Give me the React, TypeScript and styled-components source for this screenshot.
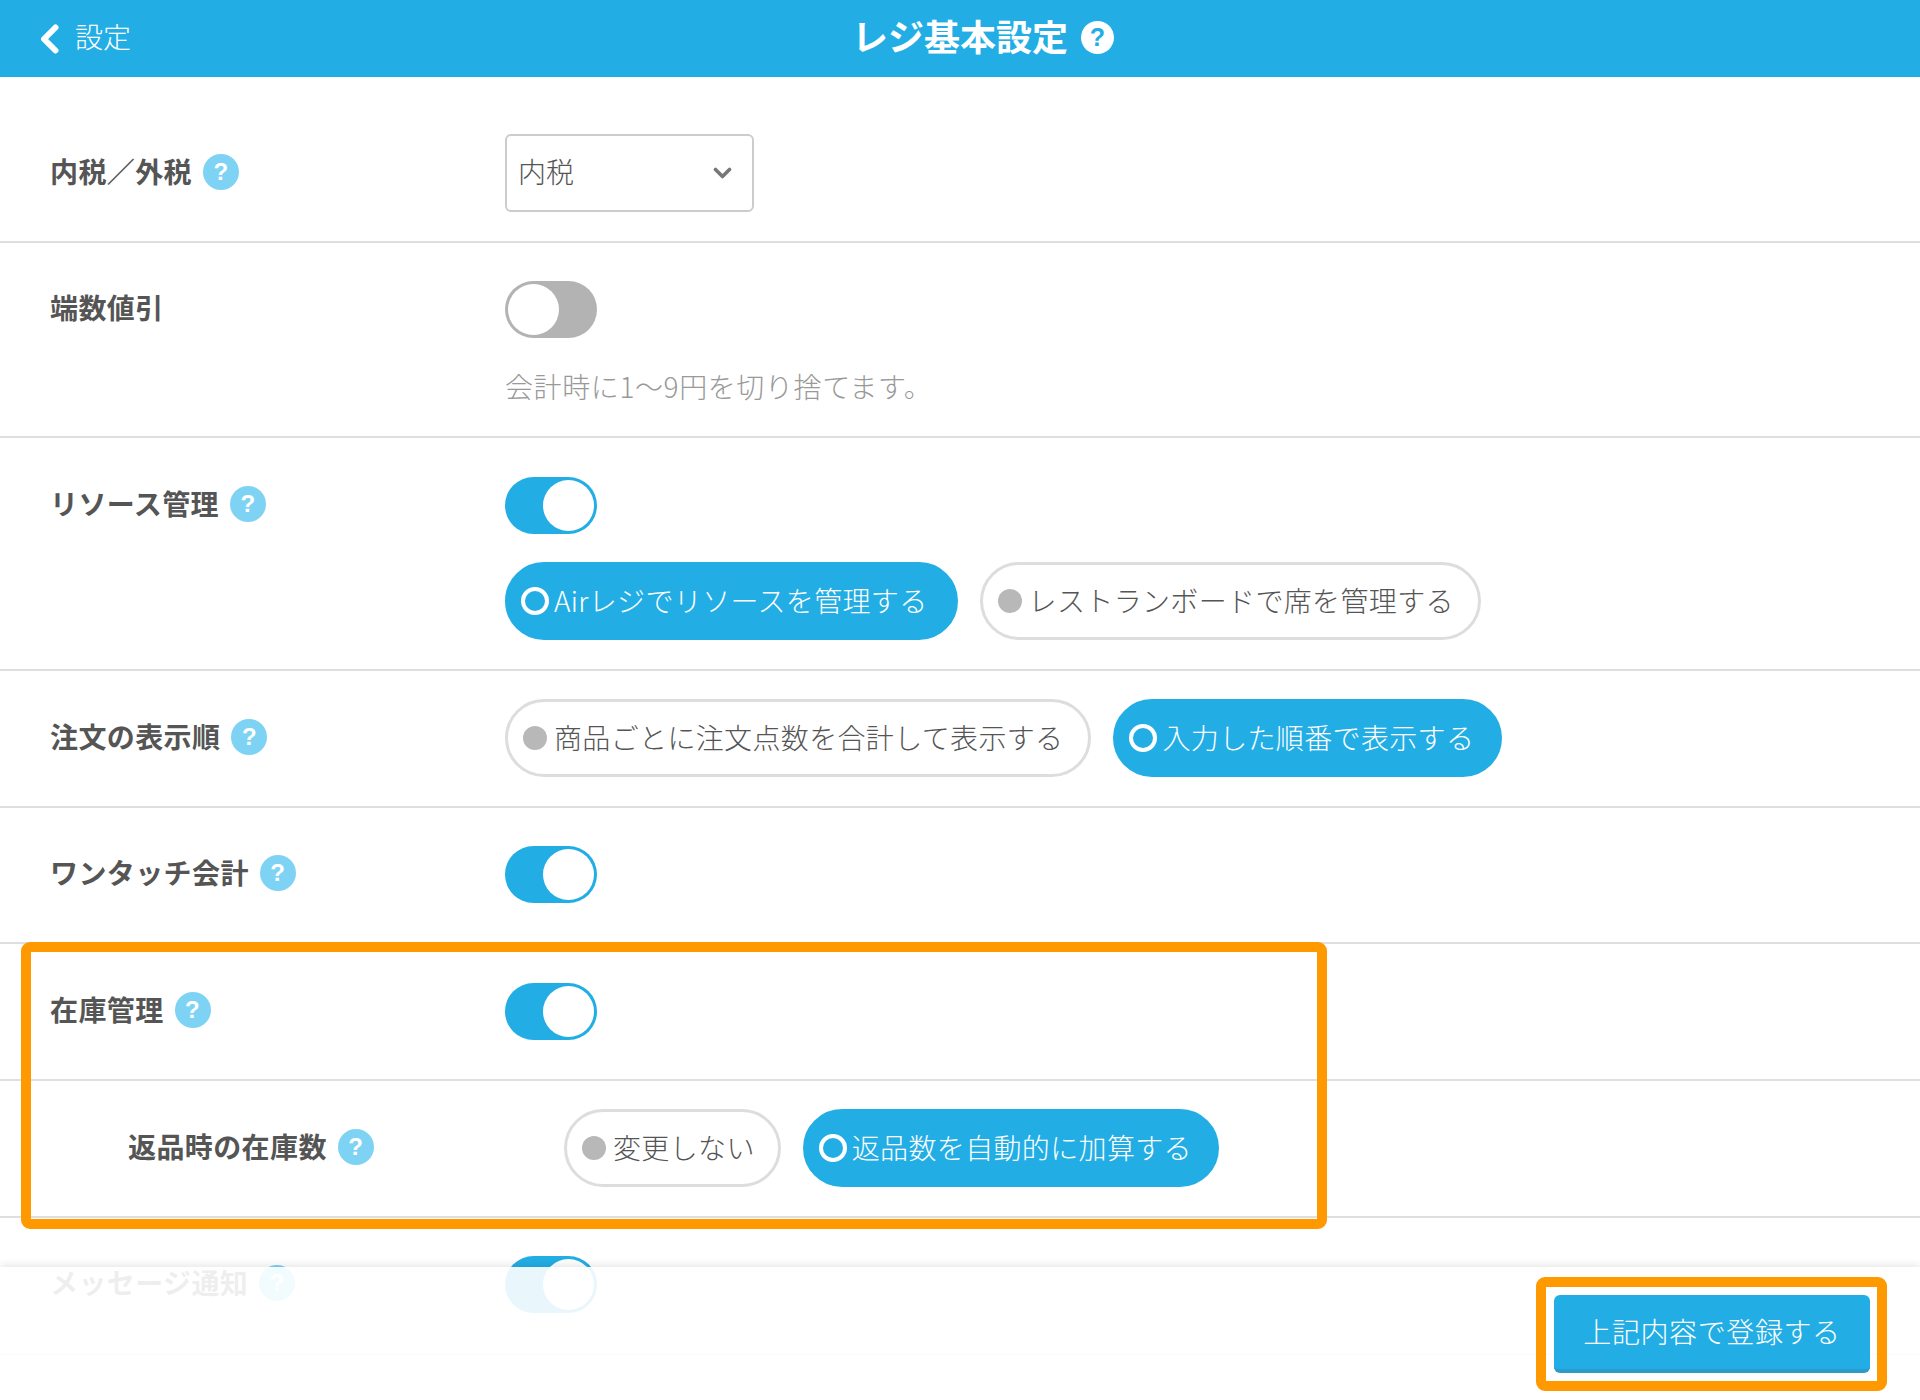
import React from "react";
import styled, { createGlobalStyle } from "styled-components";

const Global = createGlobalStyle`
  html, body { margin: 0; padding: 0; background: #fff; }
  body { font-family: "Noto Sans CJK JP", "Noto Sans", sans-serif; color: #555; }
  * { box-sizing: border-box; }
`;

const Page = styled.div`
  position: relative;
  width: 1920px;
  height: 1400px;
  overflow: hidden;
  background: #fff;
`;

const Header = styled.header`
  display: grid;
  grid-template-columns: 1fr auto 1fr;
  align-items: center;
  height: 77px;
  background: #22aee5;
  color: #fff;
`;

const Back = styled.div`
  display: flex;
  align-items: center;
  gap: 16px;
  padding-left: 40px;
  font-size: 28px;
  font-weight: 300;
`;

const BackText = styled.span`
  margin-bottom: 5px;
`;

const Title = styled.h1`
  margin: 0 0 7px;
  font-size: 36px;
  font-weight: 700;
  line-height: 70px;
`;

const HeaderHelp = styled.div`
  display: flex;
  padding-left: 13px;
`;

const Help = styled.span<{ $light?: boolean }>`
  display: inline-flex;
  align-items: center;
  justify-content: center;
  flex: none;
  width: ${(p) => (p.$light ? 33 : 36)}px;
  height: ${(p) => (p.$light ? 33 : 36)}px;
  margin-bottom: 3px;
  border-radius: 50%;
  background: ${(p) => (p.$light ? "#fff" : "#7ed3f5")};
  color: ${(p) => (p.$light ? "#22aee5" : "#fff")};
  font-family: "Liberation Sans", sans-serif;
  font-weight: 700;
  font-size: ${(p) => (p.$light ? 25 : 24)}px;
  line-height: 1;
`;

const List = styled.main`
  padding-top: 29px;
`;

const Row = styled.section<{ $indent?: boolean }>`
  display: flex;
  align-items: flex-start;
  padding: 28px 0 28.7px ${(p) => (p.$indent ? 128 : 50)}px;
  border-bottom: 2px solid #dfdfdf;
`;

const Label = styled.div<{ $indent?: boolean }>`
  display: flex;
  align-items: center;
  gap: 11px;
  flex: none;
  width: ${(p) => (p.$indent ? 436 : 455)}px;
  height: 78px;
  font-size: 28px;
  font-weight: 700;
  letter-spacing: 0.4px;
  color: #555;
`;

const LabelText = styled.span`
  margin-bottom: 5px;
`;

const Control = styled.div`
  display: flex;
  flex-direction: column;
  align-items: flex-start;
`;

const ToggleSlot = styled.div`
  display: flex;
  align-items: center;
  height: 78px;
`;

const Toggle = styled.div<{ $on?: boolean }>`
  display: flex;
  justify-content: ${(p) => (p.$on ? "flex-end" : "flex-start")};
  align-items: center;
  width: 92px;
  height: 57px;
  padding: 3px;
  border-radius: 29px;
  background: ${(p) => (p.$on ? "#22aee5" : "#b3b3b3")};
`;

const Thumb = styled.span`
  width: 51px;
  height: 51px;
  border-radius: 50%;
  background: #fff;
`;

const Hint = styled.p`
  margin: 17px 0 0;
  padding-bottom: 2px;
  font-size: 28px;
  font-weight: 300;
  letter-spacing: 0.6px;
  line-height: 40px;
  color: #999;
`;

const SelectBox = styled.div`
  display: flex;
  align-items: center;
  justify-content: space-between;
  width: 249px;
  height: 78px;
  padding: 0 20px 0 11px;
  border: 2px solid #ccc;
  border-radius: 6px;
  font-size: 28px;
  font-weight: 300;
  color: #555;
`;

const SelectText = styled.span`
  margin-bottom: 5px;
`;

const Pills = styled.div<{ $spaced?: boolean }>`
  display: flex;
  gap: 22px;
  margin-top: ${(p) => (p.$spaced ? 18 : 0)}px;
`;

const Pill = styled.div<{ $on?: boolean; $end?: number }>`
  display: flex;
  align-items: center;
  gap: 5px;
  height: 78px;
  padding: 0 ${(p) => p.$end ?? 25}px 0 13px;
  border: 3px solid ${(p) => (p.$on ? "#22aee5" : "#ddd")};
  border-radius: 39px;
  background: ${(p) => (p.$on ? "#22aee5" : "#fff")};
  color: ${(p) => (p.$on ? "#fff" : "#555")};
  font-size: 28px;
  font-weight: 300;
  letter-spacing: 0.35px;
  white-space: nowrap;
`;

const PillText = styled.span`
  margin-bottom: 3px;
`;

const Indicator = styled.span`
  display: flex;
  align-items: center;
  justify-content: center;
  flex: none;
  width: 28px;
  height: 28px;
`;

const Dot = styled.span<{ $on?: boolean }>`
  width: ${(p) => (p.$on ? 28 : 24)}px;
  height: ${(p) => (p.$on ? 28 : 24)}px;
  border-radius: 50%;
  background: ${(p) => (p.$on ? "transparent" : "#b8b8b8")};
  border: ${(p) => (p.$on ? "4.5px solid #fff" : "none")};
`;

const Footer = styled.footer`
  position: absolute;
  left: 0;
  right: 0;
  top: 1267px;
  bottom: 0;
  display: flex;
  justify-content: flex-end;
  align-items: flex-start;
  padding: 28px 50px 0 0;
  background: rgba(255, 255, 255, 0.9);
  box-shadow: 0 -2px 8px rgba(0, 0, 0, 0.1);
`;

const Submit = styled.button`
  width: 316px;
  height: 78px;
  padding: 0 0 3px;
  border: none;
  border-bottom: 4px solid #2e9ac8;
  border-radius: 6px;
  background: #22aee5;
  color: #fff;
  font-family: inherit;
  font-size: 28px;
  font-weight: 300;
  letter-spacing: 0.6px;
`;

const Highlight = styled.div<{ $x: number; $y: number; $w: number; $h: number }>`
  position: absolute;
  left: ${(p) => p.$x}px;
  top: ${(p) => p.$y}px;
  width: ${(p) => p.$w}px;
  height: ${(p) => p.$h}px;
  border: 10px solid #ff9900;
  border-radius: 9px;
  pointer-events: none;
`;

const Sw = ({ on }: { on?: boolean }) => (
  <ToggleSlot>
    <Toggle $on={on}>
      <Thumb />
    </Toggle>
  </ToggleSlot>
);

const Opt = ({ on, end, children }: { on?: boolean; end?: number; children: React.ReactNode }) => (
  <Pill $on={on} $end={end}>
    <Indicator>
      <Dot $on={on} />
    </Indicator>
    <PillText>{children}</PillText>
  </Pill>
);

const Lbl = ({ text, help = true, indent }: { text: string; help?: boolean; indent?: boolean }) => (
  <Label $indent={indent}>
    <LabelText>{text}</LabelText>
    {help && <Help>?</Help>}
  </Label>
);

export default function App() {
  return (
    <Page>
      <Global />
      <Header>
        <Back>
          <svg width="19" height="30" viewBox="0 0 19 30" fill="none">
            <polyline points="15.5,3.5 4,15 15.5,26.5" stroke="#fff" strokeWidth="6" strokeLinecap="round" strokeLinejoin="round" />
          </svg>
          <BackText>設定</BackText>
        </Back>
        <Title>レジ基本設定</Title>
        <HeaderHelp>
          <Help $light>?</Help>
        </HeaderHelp>
      </Header>
      <List>
        <Row>
          <Lbl text="内税／外税" />
          <Control>
            <SelectBox>
              <SelectText>内税</SelectText>
              <svg width="19" height="12" viewBox="0 0 19 12" fill="none">
                <polyline points="2.5,2.5 9.5,9.5 16.5,2.5" stroke="#777" strokeWidth="3.6" strokeLinecap="round" strokeLinejoin="round" />
              </svg>
            </SelectBox>
          </Control>
        </Row>
        <Row>
          <Lbl text="端数値引" help={false} />
          <Control>
            <Sw />
            <Hint>会計時に1〜9円を切り捨てます。</Hint>
          </Control>
        </Row>
        <Row>
          <Lbl text="リソース管理" />
          <Control>
            <Sw on />
            <Pills $spaced>
              <Opt on end={27}>Airレジでリソースを管理する</Opt>
              <Opt end={24}>レストランボードで席を管理する</Opt>
            </Pills>
          </Control>
        </Row>
        <Row>
          <Lbl text="注文の表示順" />
          <Control>
            <Pills>
              <Opt>商品ごとに注文点数を合計して表示する</Opt>
              <Opt on>入力した順番で表示する</Opt>
            </Pills>
          </Control>
        </Row>
        <Row>
          <Lbl text="ワンタッチ会計" />
          <Control>
            <Sw on />
          </Control>
        </Row>
        <Row>
          <Lbl text="在庫管理" />
          <Control>
            <Sw on />
          </Control>
        </Row>
        <Row $indent>
          <Lbl text="返品時の在庫数" indent />
          <Control>
            <Pills>
              <Opt end={23}>変更しない</Opt>
              <Opt on end={24}>返品数を自動的に加算する</Opt>
            </Pills>
          </Control>
        </Row>
        <Row>
          <Lbl text="メッセージ通知" />
          <Control>
            <Sw on />
          </Control>
        </Row>
      </List>
      <Footer>
        <Submit>上記内容で登録する</Submit>
      </Footer>
      <Highlight $x={21} $y={942} $w={1306} $h={287} />
      <Highlight $x={1536} $y={1277} $w={351} $h={114} />
    </Page>
  );
}
